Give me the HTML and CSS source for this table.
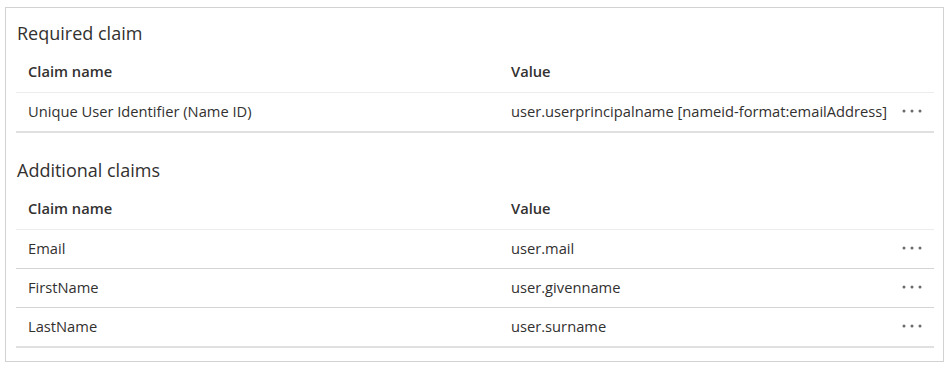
FILE: index.html
```html
<!DOCTYPE html>
<html lang="en">
<head>
<meta charset="utf-8">
<title>Claims</title>
<link rel="stylesheet" href="styles.css">
</head>
<body>
<div class="panel">
  <section class="section">
    <h2 class="section-title">Required claim</h2>
    <div class="table">
      <div class="row head">
        <div class="cell name">Claim name</div>
        <div class="cell value">Value</div>
        <div class="cell actions"></div>
      </div>
      <div class="row last">
        <div class="cell name">Unique User Identifier (Name ID)</div>
        <div class="cell value">user.userprincipalname [nameid-format:emailAddress]</div>
        <div class="cell actions"><svg class="more" width="20" height="4" viewBox="0 0 20 4"><circle cx="2" cy="2" r="1.5"/><circle cx="10" cy="2" r="1.5"/><circle cx="18" cy="2" r="1.5"/></svg></div>
      </div>
    </div>
  </section>
  <section class="section second">
    <h2 class="section-title">Additional claims</h2>
    <div class="table">
      <div class="row head">
        <div class="cell name">Claim name</div>
        <div class="cell value">Value</div>
        <div class="cell actions"></div>
      </div>
      <div class="row">
        <div class="cell name">Email</div>
        <div class="cell value">user.mail</div>
        <div class="cell actions"><svg class="more" width="20" height="4" viewBox="0 0 20 4"><circle cx="2" cy="2" r="1.5"/><circle cx="10" cy="2" r="1.5"/><circle cx="18" cy="2" r="1.5"/></svg></div>
      </div>
      <div class="row">
        <div class="cell name">FirstName</div>
        <div class="cell value">user.givenname</div>
        <div class="cell actions"><svg class="more" width="20" height="4" viewBox="0 0 20 4"><circle cx="2" cy="2" r="1.5"/><circle cx="10" cy="2" r="1.5"/><circle cx="18" cy="2" r="1.5"/></svg></div>
      </div>
      <div class="row last">
        <div class="cell name">LastName</div>
        <div class="cell value">user.surname</div>
        <div class="cell actions"><svg class="more" width="20" height="4" viewBox="0 0 20 4"><circle cx="2" cy="2" r="1.5"/><circle cx="10" cy="2" r="1.5"/><circle cx="18" cy="2" r="1.5"/></svg></div>
      </div>
    </div>
  </section>
</div>
</body>
</html>
```

FILE: styles.css
```css
html, body {
  margin: 0;
  padding: 0;
  background: #ffffff;
}

body {
  font-family: "Open Sans", "Noto Sans", "Liberation Sans", sans-serif;
  color: #323130;
  font-size: 14.7px;
}

.panel {
  box-sizing: border-box;
  width: 939px;
  margin: 7px 0 0 5px;
  border: 1px solid #d2d2d2;
  padding: 13px 9px 13px 10px;
}

.section.second {
  margin-top: 25px;
}

.section-title {
  margin: 0;
  padding-left: 1px;
  font-size: 18px;
  font-weight: 400;
  line-height: 24px;
  color: #323130;
}

.table {
  display: flex;
  flex-direction: column;
}

.row {
  display: flex;
  align-items: center;
  line-height: 20px;
  padding: 8px 0 10px;
  border-bottom: 1px solid #d4d4d4;
}

.row.head {
  padding: 16px 0 11px;
  font-weight: 600;
  border-bottom-color: #ececec;
}

.row.last {
  border-bottom: 2px solid #e0e0e0;
}

.cell.name {
  width: 483px;
  box-sizing: border-box;
  padding-left: 12px;
}

.cell.value {
  flex: 1;
  padding-left: 12px;
}

.cell.actions {
  width: 40px;
  height: 20px;
  display: flex;
  align-items: center;
}

.more {
  margin-left: 8px;
  fill: #6b6b6b;
}
```
